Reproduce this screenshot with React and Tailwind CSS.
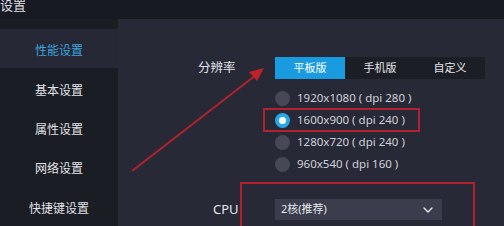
import { ChevronDown } from 'lucide-react';

const menu = ['性能设置', '基本设置', '属性设置', '网络设置', '快捷键设置'];
const options = [
    { label: '1920x1080 ( dpi 280 )', checked: false },
    { label: '1600x900 ( dpi 240 )', checked: true },
    { label: '1280x720 ( dpi 240 )', checked: false },
    { label: '960x540 ( dpi 160 )', checked: false },
];
const tabs = ['平板版', '手机版', '自定义'];

const font = { fontFamily: '"Noto Sans", "Noto Sans CJK SC", sans-serif' };

export default function App() {
    return (
        <div className="relative w-[504px] h-[226px] overflow-hidden bg-[#272937] text-[#d4d5dc]" style={font}>
            {/* title bar */}
            <div className="h-[19px] bg-[#181a21] flex items-start">
                <span className="text-[13px] leading-[12px] -mt-[1px] text-[#dcdde2]">设置</span>
            </div>

            <div className="flex h-[207px]">
                {/* sidebar */}
                <div className="w-[118px] bg-[#1b1d24] flex flex-col pt-[10px]">
                    {menu.map((m, i) => (
                        <div
                            key={m}
                            className={`h-[40px] flex items-center justify-center pt-[5px] text-[12px] ${i === 0 ? 'bg-[#262836] text-[#3aa3dd]' : 'text-[#e2e3e8]'}`}
                        >
                            {m}
                        </div>
                    ))}
                </div>

                {/* content */}
                <div className="flex-1 pt-[38px] pl-[80px]">
                    <div className="flex">
                        <div className="w-[77px] h-[22px] flex items-center text-[12.5px] text-[#e0e1e6]">分辨率</div>
                        <div>
                            <div className="flex w-[210px] h-[22px] bg-[#1c1e26]">
                                {tabs.map((t, i) => (
                                    <div
                                        key={t}
                                        className={`w-[70px] flex items-center justify-center text-[11px] ${i === 0 ? 'bg-[#1a9be0] text-white' : 'text-[#e4e5ea]'}`}
                                    >
                                        {t}
                                    </div>
                                ))}
                            </div>
                            <div className="mt-[8px] flex flex-col">
                                {options.map(o => (
                                    <div key={o.label} className="h-[22px] flex items-center gap-[7px] text-[11.5px] text-[#d0d1d8]">
                                        {o.checked ? (
                                            <span className="w-[15px] h-[15px] rounded-full bg-[#27a8e8] flex items-center justify-center">
                                                <span className="w-[7px] h-[7px] rounded-full bg-white" />
                                            </span>
                                        ) : (
                                            <span className="w-[15px] h-[15px] rounded-full bg-[#464855]" />
                                        )}
                                        <span>{o.label}</span>
                                    </div>
                                ))}
                            </div>
                        </div>
                    </div>

                    <div className="flex mt-[24px]">
                        <div className="w-[77px] h-[21px] flex items-center pl-[15px] text-[13px] text-[#e4e5ea]">CPU</div>
                        <div className="w-[167px] h-[21px] bg-[#3b3d4c] flex items-center justify-between pl-[6px] pr-[6px] text-[11px] text-[#e8e9ee]">
                            <span>2核(推荐)</span>
                            <ChevronDown size={16} strokeWidth={2} className="text-[#e8e9ee]" />
                        </div>
                    </div>
                </div>
            </div>

            {/* red annotations */}
            <div className="absolute left-[263px] top-[108px] w-[157px] h-[24px] border-2 border-[#b3222c]" />
            <div className="absolute left-[240px] top-[182px] w-[235px] h-[60px] border-2 border-[#b3222c]" />
            <svg className="absolute left-0 top-0" width="504" height="226">
                <line x1="132" y1="171" x2="256" y2="75" stroke="#b3222c" strokeWidth="2" />
                <polygon points="264,68 249,72 257,81" fill="#c0202a" />
            </svg>
        </div>
    );
}
